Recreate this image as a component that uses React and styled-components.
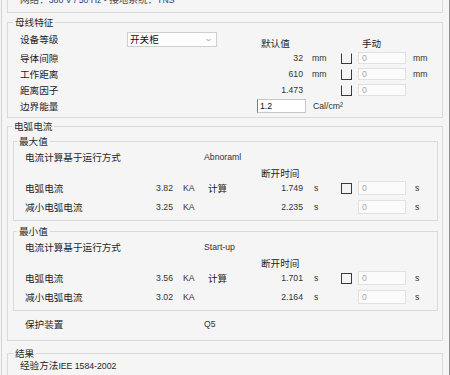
import React from "react";
import styled, { createGlobalStyle } from "styled-components";

const Global = createGlobalStyle`
  html, body {
    margin: 0;
    background: #f5f5f5;
  }
  body {
    font-family: "Noto Sans CJK SC", "Liberation Sans", sans-serif;
    font-size: 9.6px;
    color: #1e1e1e;
  }
`;

const Page = styled.div`
  width: 449px;
  height: 375px;
  margin-left: 1px;
  box-sizing: border-box;
  border-left: 1px solid #d4d4d4;
  border-right: 1px solid #8e8e8e;
  padding: 0 6px 0 5px;
  overflow: hidden;
  background: #f5f5f5;
`;

const Scroller = styled.div`
  margin-top: -14px;
  display: flex;
  flex-direction: column;
`;

const Group = styled.div`
  position: relative;
  border: 1px solid #dadada;
  margin-top: ${(p) => p.$mt || 0}px;
  padding: ${(p) => p.$pad};
`;

const Legend = styled.span`
  position: absolute;
  top: -7px;
  left: ${(p) => p.$left}px;
  padding: 0 2px;
  line-height: 12px;
  background: #f5f5f5;
  color: #2a2a2a;
`;

const Lat = styled.span`
  font-family: "Liberation Sans", "Noto Sans CJK SC", sans-serif;
  font-size: 8.7px;
`;

const NetLine = styled.div`
  height: 14px;
  line-height: 14px;
  white-space: nowrap;
`;

const NetKey = styled.span`
  color: #4a4a4a;
`;

const NetVal = styled(Lat)`
  color: #24407a;
`;

const BusRow = styled.div`
  display: grid;
  grid-template-columns: 107px 130px 48px 36px 17px 48px 1fr;
  height: ${(p) => p.$h}px;
  align-items: center;
  line-height: 12px;
`;

const ArcRow = styled.div`
  display: grid;
  grid-template-columns: 115px 36px 24px 57px 48px 36px 17px 48px 1fr;
  height: ${(p) => p.$h || 16}px;
  margin-top: ${(p) => p.$mt || 0}px;
  margin-left: ${(p) => p.$inset || 0}px;
  align-items: center;
  line-height: 12px;
`;

const Label = styled.span`
  grid-column: ${(p) => p.$span || "auto"};
  align-self: ${(p) => (p.$top ? "start" : "center")};
  line-height: ${(p) => (p.$top ? "16px" : "12px")};
  white-space: nowrap;
  color: #1e1e1e;
`;

const Head = styled.span`
  grid-column: ${(p) => p.$col};
  align-self: ${(p) => (p.$end ? "end" : "center")};
  margin-bottom: ${(p) => (p.$end ? 1 : 0)}px;
  padding-left: 4px;
  white-space: nowrap;
  color: #1e1e1e;
`;

const Num = styled(Lat)`
  grid-column: ${(p) => p.$col};
  text-align: right;
  padding-right: ${(p) => p.$pr || 2}px;
  color: #333;
`;

const Unit = styled(Lat)`
  grid-column: ${(p) => p.$col};
  padding-left: ${(p) => p.$pl}px;
  white-space: nowrap;
  color: #333;
`;

const Note = styled(Lat)`
  grid-column: ${(p) => p.$col};
  padding-left: 4px;
  white-space: nowrap;
  color: #333;
`;

const Mode = styled.span`
  grid-column: ${(p) => p.$col};
  padding-left: 8px;
  color: #1e1e1e;
`;

const Check = styled.span`
  grid-column: ${(p) => p.$col};
  width: 11px;
  height: 11px;
  box-sizing: border-box;
  border: 1px solid #3a3a3a;
  border-top-color: ${(p) => (p.$open ? "transparent" : "#3a3a3a")};
`;

const Field = styled.div`
  grid-column: ${(p) => p.$col};
  height: ${(p) => p.$h}px;
  line-height: ${(p) => p.$h - 2}px;
  box-sizing: border-box;
  border: 1px solid #e1e1e1;
  background: #fbfbfb;
  padding-left: 3px;
  font-family: "Liberation Sans", sans-serif;
  font-size: 8.7px;
  color: #a8a8a8;
`;

const EditField = styled(Field)`
  width: 49px;
  background: #ffffff;
  border-color: #c8c8c8;
  border-left-color: #7c7c7c;
  padding-left: 2px;
  color: #111;
`;

const Select = styled.div`
  grid-column: 2;
  align-self: start;
  margin-top: 1px;
  width: 90px;
  height: 15px;
  box-sizing: border-box;
  border: 1px solid #cfcfcf;
  background: #fdfdfd;
  display: flex;
  align-items: center;
  justify-content: space-between;
  padding: 0 5px 0 2px;
  color: #111;
  line-height: 13px;
`;

const Arrow = () => (
  <svg width="5" height="4" viewBox="0 0 5 4">
    <path d="M0.5 1 L2.5 3 L4.5 1" fill="none" stroke="#9a9a9a" strokeWidth="0.9" />
  </svg>
);

const busRows = [
  { label: "导体间隙", val: "32", unit: "mm", unit2: "mm" },
  { label: "工作距离", val: "610", unit: "mm", unit2: "mm" },
  { label: "距离因子", val: "1.473", unit: "", unit2: "" },
];

function ArcBlock({ title, mode, arc, reduced }) {
  return (
    <Group $mt={title === "最小值" ? 10 : 0} $pad="7px 0 5px 11px">
      <Legend $left={3}>{title}</Legend>
      <ArcRow $h={16}>
        <Label $span="1 / 4">电流计算基于运行方式</Label>
        <Note $col="4 / 6">{mode}</Note>
      </ArcRow>
      <ArcRow $h={15}>
        <Head $col="5 / 7">断开时间</Head>
      </ArcRow>
      <ArcRow $h={16}>
        <Label>电弧电流</Label>
        <Num $col={2} $pr={3}>{arc.i}</Num>
        <Unit $col={3} $pl={7}>KA</Unit>
        <Mode $col={4}>计算</Mode>
        <Num $col={5}>{arc.t}</Num>
        <Unit $col={6} $pl={9}>s</Unit>
        <Check $col={7} />
        <Field $col={8} $h={14}>0</Field>
        <Unit $col={9} $pl={9}>s</Unit>
      </ArcRow>
      <ArcRow $h={16} $mt={3}>
        <Label>减小电弧电流</Label>
        <Num $col={2} $pr={3}>{reduced.i}</Num>
        <Unit $col={3} $pl={7}>KA</Unit>
        <Num $col={5}>{reduced.t}</Num>
        <Unit $col={6} $pl={9}>s</Unit>
        <Field $col={8} $h={14}>0</Field>
        <Unit $col={9} $pl={9}>s</Unit>
      </ArcRow>
    </Group>
  );
}

export default function App() {
  return (
    <Page>
      <Global />
      <Scroller>
        <Group $pad="5px 0 6px 12px">
          <NetLine>
            <NetKey>网络：</NetKey>
            <NetVal>380 V / 50 Hz - </NetVal>
            <NetKey>接地系统：</NetKey>
            <NetVal>TNS</NetVal>
          </NetLine>
        </Group>

        <Group $mt={9} $pad="8px 0 3px 12px">
          <Legend $left={5}>母线特征</Legend>
          <BusRow $h={19}>
            <Label $top>设备等级</Label>
            <Select>
              <span>开关柜</span>
              <Arrow />
            </Select>
            <Head $col="3 / 5" $end>默认值</Head>
            <Head $col="6 / 8" $end>手动</Head>
          </BusRow>
          {busRows.map((r) => (
            <BusRow $h={16} key={r.label}>
              <Label>{r.label}</Label>
              <Num $col={3}>{r.val}</Num>
              <Unit $col={4} $pl={7}>{r.unit}</Unit>
              <Check $col={5} $open />
              <Field $col={6} $h={12}>0</Field>
              <Unit $col={7} $pl={7}>{r.unit2}</Unit>
            </BusRow>
          ))}
          <BusRow $h={16}>
            <Label>边界能量</Label>
            <EditField $col={3} $h={14}>1.2</EditField>
            <Unit $col="4 / 7" $pl={8}>Cal/cm²</Unit>
          </BusRow>
        </Group>

        <Group $mt={8} $pad="14px 4px 8px 5px">
          <Legend $left={4}>电弧电流</Legend>
          <ArcBlock
            title="最大值"
            mode="Abnoraml"
            arc={{ i: "3.82", t: "1.749" }}
            reduced={{ i: "3.25", t: "2.235" }}
          />
          <ArcBlock
            title="最小值"
            mode="Start-up"
            arc={{ i: "3.56", t: "1.701" }}
            reduced={{ i: "3.02", t: "2.164" }}
          />
          <ArcRow $h={16} $mt={5} $inset={12}>
            <Label $span="1 / 4">保护装置</Label>
            <Note $col="4 / 6">Q5</Note>
          </ArcRow>
        </Group>

        <Group $mt={12} $pad="4px 0 20px 12px">
          <Legend $left={5}>结果</Legend>
          <NetLine>
            经验方法<Lat>IEE 1584-2002</Lat>
          </NetLine>
        </Group>
      </Scroller>
    </Page>
  );
}
